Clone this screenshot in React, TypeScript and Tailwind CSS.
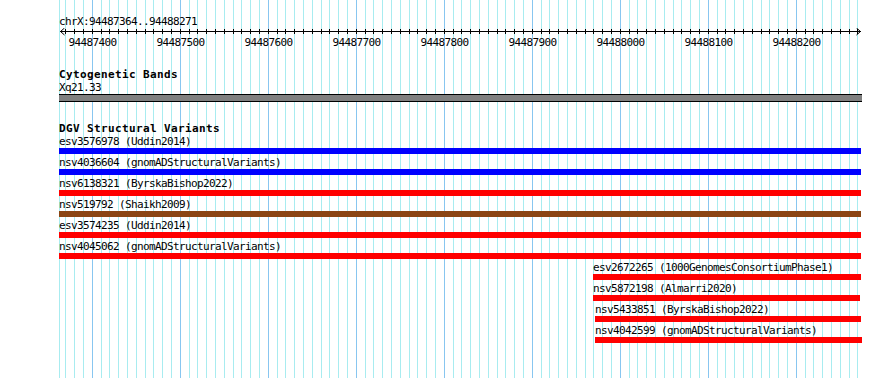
import React from "react";

// genome coords -> px: 10bp steps every 8.8px
const gridXs = Array.from({ length: 91 }, (_, k) => ({
  x: Math.floor(65.8 + 8.8 * k),
  major: k % 10 === 3,
}));

const rulerLabels = [
  "94487400",
  "94487500",
  "94487600",
  "94487700",
  "94487800",
  "94487900",
  "94488000",
  "94488100",
  "94488200",
].map((label, i) => ({ label, x: 92.5 + 88 * i }));

interface Variant {
  name: string;
  color: string;
  offset: number;
  width: number;
}

const variants: Variant[] = [
  { name: "esv3576978 (Uddin2014)", color: "bg-[#0000ff]", offset: 0, width: 802 },
  { name: "nsv4036604 (gnomADStructuralVariants)", color: "bg-[#0000ff]", offset: 0, width: 802 },
  { name: "nsv6138321 (ByrskaBishop2022)", color: "bg-[#ff0000]", offset: 0, width: 802 },
  { name: "nsv519792 (Shaikh2009)", color: "bg-[#8b4513]", offset: 0, width: 802 },
  { name: "esv3574235 (Uddin2014)", color: "bg-[#ff0000]", offset: 0, width: 802 },
  { name: "nsv4045062 (gnomADStructuralVariants)", color: "bg-[#ff0000]", offset: 0, width: 802 },
  { name: "esv2672265 (1000GenomesConsortiumPhase1)", color: "bg-[#ff0000]", offset: 534, width: 268 },
  { name: "nsv5872198 (Almarri2020)", color: "bg-[#ff0000]", offset: 534, width: 267 },
  { name: "nsv5433851 (ByrskaBishop2022)", color: "bg-[#ff0000]", offset: 536, width: 266 },
  { name: "nsv4042599 (gnomADStructuralVariants)", color: "bg-[#ff0000]", offset: 536, width: 267 },
];

const GridLines = () => (
  <svg
    className="absolute inset-0 pointer-events-none"
    width={890}
    height={378}
    shapeRendering="crispEdges"
  >
    <line x1={59.5} x2={59.5} y1={0} y2={378} stroke="#a8ecf0" />
    {gridXs.map(({ x, major }) => (
      <line
        key={x}
        x1={x + 0.5}
        x2={x + 0.5}
        y1={0}
        y2={378}
        stroke={major ? "#88c6f0" : "#a8ecf0"}
      />
    ))}
  </svg>
);

const Ruler = () => (
  <svg width={890} height={8} className="block" shapeRendering="crispEdges">
    <line x1={60} x2={861} y1={3.5} y2={3.5} stroke="#000" />
    {gridXs.map(({ x }) => (
      <line key={x} x1={x + 0.5} x2={x + 0.5} y1={1} y2={6} stroke="#000" />
    ))}
    <polyline points="64.5,0 60.5,3.5 64.5,7" fill="none" stroke="#000" shapeRendering="auto" />
    <polyline points="856.5,0 860.5,3.5 856.5,7" fill="none" stroke="#000" shapeRendering="auto" />
  </svg>
);

export default function App() {
  return (
    <div className="relative w-[890px] h-[378px] overflow-hidden bg-white text-black font-['DejaVu_Sans_Mono','Liberation_Mono',monospace] text-[11px] leading-[13px] tracking-[-0.62px]">
      <GridLines />

      <div className="relative z-10 pt-[15px]">
        {/* Ruler */}
        <div className="pl-[59px] h-[13px] whitespace-nowrap">chrX:94487364..94488271</div>
        <Ruler />
        <div className="relative h-[13px]">
          {rulerLabels.map((l) => (
            <span
              key={l.label}
              className="absolute top-0 -translate-x-1/2 whitespace-nowrap"
              style={{ left: l.x }}
            >
              {l.label}
            </span>
          ))}
        </div>

        {/* Cytogenetic bands */}
        <div className="mt-[19px] pl-[59px]">
          <div className="h-[13px] font-bold tracking-[0.38px] whitespace-nowrap">Cytogenetic Bands</div>
          <div className="h-[13px] whitespace-nowrap">Xq21.33</div>
          <div className="w-[803px] h-[8px] border-y border-black bg-[#808080]" />
        </div>

        {/* DGV structural variants */}
        <div className="mt-[20px] pl-[59px]">
          <div className="h-[13px] font-bold tracking-[0.38px] whitespace-nowrap">DGV Structural Variants</div>
          <div className="flex flex-col gap-[2px]">
            {variants.map((v) => (
              <div key={v.name} className="flex flex-col" style={{ marginLeft: v.offset }}>
                <div className="h-[13px] whitespace-nowrap">{v.name}</div>
                <div className={`h-[6px] ${v.color}`} style={{ width: v.width }} />
              </div>
            ))}
          </div>
        </div>
      </div>
    </div>
  );
}
